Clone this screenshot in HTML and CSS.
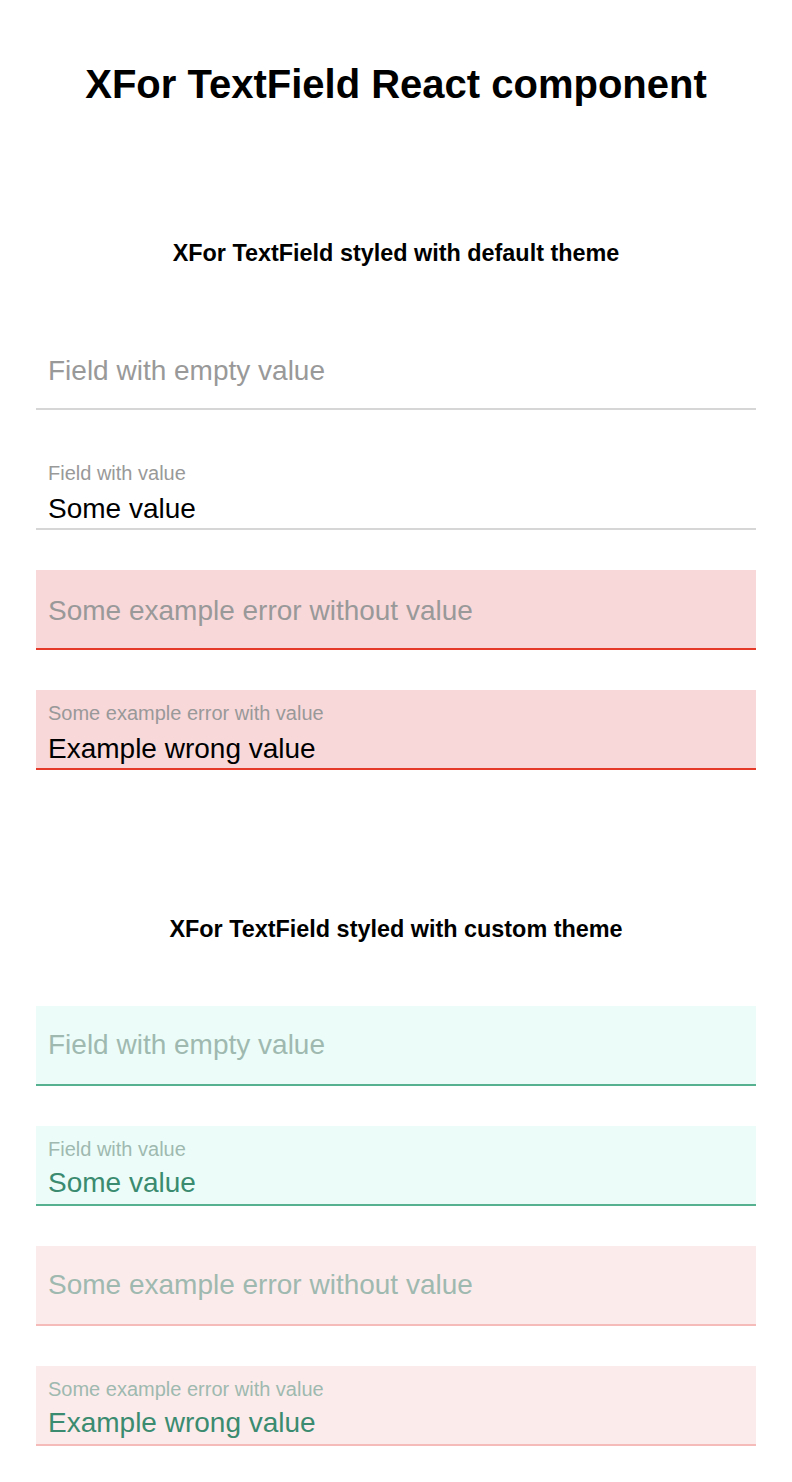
FILE: index.html
```html
<!DOCTYPE html>
<html lang="en">
<head>
<meta charset="utf-8">
<title>XFor TextField React component</title>
<link rel="stylesheet" href="styles.css">
</head>
<body>
<div class="page">
  <h1 class="title">XFor TextField React component</h1>

  <section class="section">
    <h2 class="section-title">XFor TextField styled with default theme</h2>
    <div class="fields">
      <div class="field field--empty">
        <span class="field-label">Field with empty value</span>
      </div>
      <div class="field">
        <span class="field-label">Field with value</span>
        <span class="field-value">Some value</span>
      </div>
      <div class="field field--empty field--error">
        <span class="field-label">Some example error without value</span>
      </div>
      <div class="field field--error">
        <span class="field-label">Some example error with value</span>
        <span class="field-value">Example wrong value</span>
      </div>
    </div>
  </section>

  <section class="section section--custom">
    <h2 class="section-title">XFor TextField styled with custom theme</h2>
    <div class="fields custom">
      <div class="field field--empty">
        <span class="field-label">Field with empty value</span>
      </div>
      <div class="field">
        <span class="field-label">Field with value</span>
        <span class="field-value">Some value</span>
      </div>
      <div class="field field--empty field--error">
        <span class="field-label">Some example error without value</span>
      </div>
      <div class="field field--error">
        <span class="field-label">Some example error with value</span>
        <span class="field-value">Example wrong value</span>
      </div>
    </div>
  </section>
</div>
</body>
</html>
```
FILE: styles.css
```css
html, body {
  margin: 0;
  padding: 0;
  background: #ffffff;
}

body {
  font-family: "Liberation Sans", Arial, Helvetica, sans-serif;
  color: #000000;
}

.page {
  padding: 61px 36px 36px;
}

.title {
  margin: 0;
  font-size: 40px;
  line-height: 46px;
  font-weight: 700;
  text-align: center;
}

.section {
  margin-top: 133px;
}

.section--custom {
  margin-top: 146px;
}

.section-title {
  margin: 0 0 63px;
  font-size: 23.4px;
  line-height: 27px;
  font-weight: 700;
  text-align: center;
}

.fields {
  display: flex;
  flex-direction: column;
  gap: 40px;
}

.field {
  box-sizing: border-box;
  height: 80px;
  padding: 11px 12px 0;
  display: flex;
  flex-direction: column;
  border-bottom: 2px solid #d6d6d6;
  background: transparent;
}

.field-label {
  font-size: 20px;
  line-height: 24px;
  color: #999999;
  white-space: nowrap;
}

.field-value {
  margin-top: 8px;
  font-size: 28px;
  line-height: 32px;
  color: #000000;
  white-space: nowrap;
}

.field--empty {
  padding-top: 4px;
  justify-content: center;
}

.field--empty .field-label {
  font-size: 28px;
  line-height: 32px;
}

.field--error {
  background: #f8d8d9;
  border-bottom-color: #e5392a;
}

/* custom theme */
.custom .field {
  background: #ecfdf9;
  border-bottom-color: #55b18f;
}

.custom .field--empty {
  padding-top: 0;
}

.custom .field-label {
  color: #9fb9b0;
}

.custom .field-value {
  margin-top: 6px;
  color: #3a8b6f;
}

.custom .field--error {
  background: #fbeceb;
  border-bottom-color: #f4bbb8;
}
```
